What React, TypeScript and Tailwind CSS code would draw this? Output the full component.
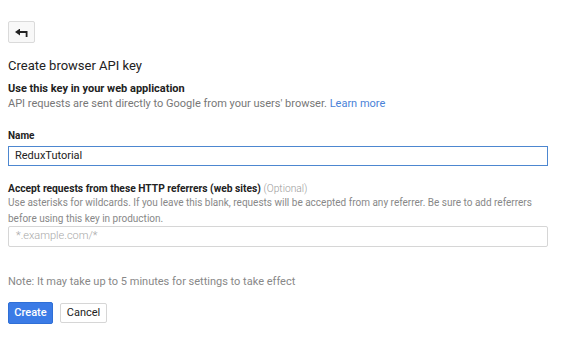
import React from "react";

export default function App() {
  return (
    <div
      className="w-[586px] h-[346px] bg-white px-2 pt-[21px] text-[#212121]"
      style={{ fontFamily: "Roboto, 'Liberation Sans', sans-serif" }}
    >
      <button className="flex h-[22px] w-[27px] items-center justify-center rounded-[2px] border border-[#dadada] bg-[#f8f8f8]">
        <svg width="13" height="8" viewBox="0 0 13 8" className="mt-[1px]">
          <path d="M0 3 L5 -0.5 L5 6.5 Z" fill="#222" />
          <path d="M4 3 H11.6 V8" stroke="#222" strokeWidth="1.8" fill="none" />
        </svg>
      </button>

      <div className="mt-[15px] text-[13px] leading-[16px] text-[#222]">Create browser API key</div>

      <div className="mt-[7px] text-[11px] font-bold leading-[15px] text-[#222]">
        Use this key in your web application
      </div>
      <div className="text-[11px] leading-[16px] text-[#777]">
        API requests are sent directly to Google from your users' browser.{" "}
        <span className="text-[#4a82d8]">Learn more</span>
      </div>

      <div className="mt-[16px] text-[10px] font-bold leading-[16px] text-[#222]">Name</div>
      <div className="mt-[2px] flex h-[20px] w-[540px] items-center border border-[#4d87d0] px-[6px] text-[11px] text-[#222]">
        ReduxTutorial
      </div>

      <div className="mt-[16px] text-[10.25px] leading-[13px] text-[#222]">
        <span className="font-bold">Accept requests from these HTTP referrers (web sites)</span>{" "}
        <span className="font-light text-[#9a9a9a]">(Optional)</span>
      </div>
      <div className="text-[10px] leading-[16px] text-[#888]">
        Use asterisks for wildcards. If you leave this blank, requests will be accepted from any referrer. Be sure to add referrers
        <br />
        before using this key in production.
      </div>
      <div className="mt-[-1px] flex h-[21px] w-[540px] items-center rounded-[2px] border border-[#d6d6d6] px-[7px] text-[11px] font-light text-[#a8a8a8]">
        *.example.com/*
      </div>

      <div className="mt-[27px] text-[11px] leading-[16px] text-[#888]">
        Note: It may take up to 5 minutes for settings to take effect
      </div>

      <div className="mt-[12px] flex gap-[7px]">
        <button className="flex h-[22px] w-[45px] items-center justify-center rounded-[2px] border border-[#2f6fd6] bg-[#3b7be6] text-[11px] font-medium text-white">
          Create
        </button>
        <button className="mt-[1px] flex h-[20px] w-[47px] items-center justify-center rounded-[2px] border border-[#d6d6d6] bg-white text-[11px] text-[#222]">
          Cancel
        </button>
      </div>
    </div>
  );
}
